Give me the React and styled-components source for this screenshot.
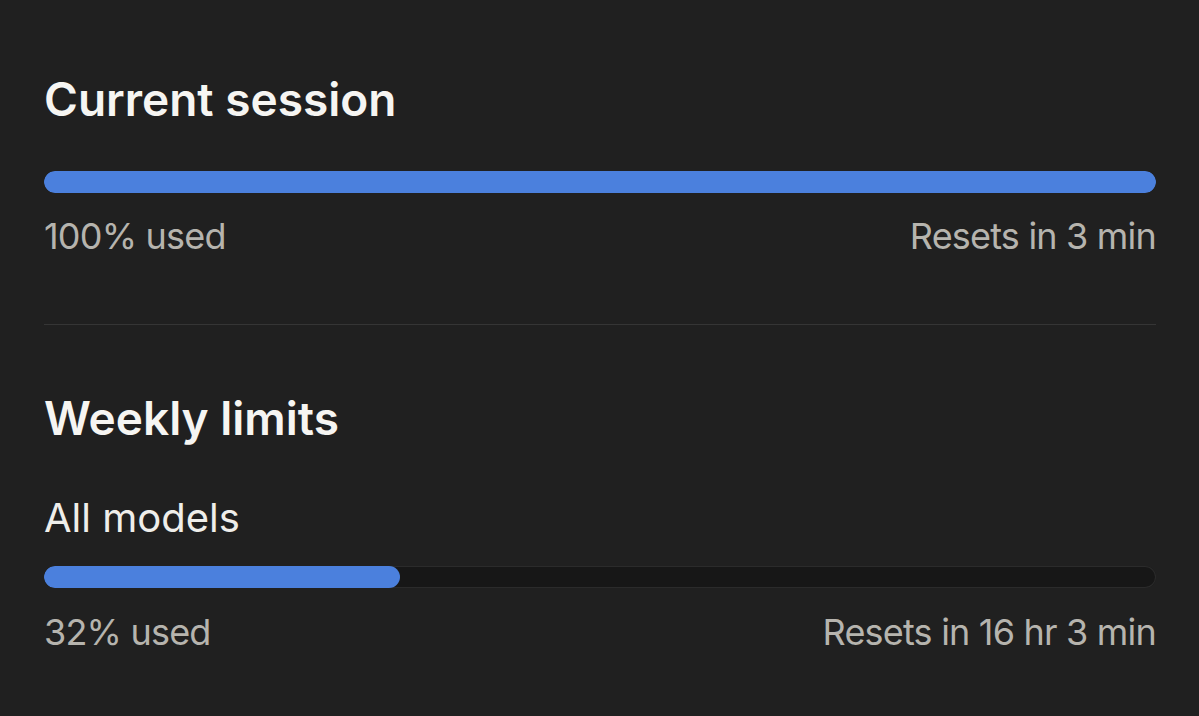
import React from "react";
import styled, { createGlobalStyle } from "styled-components";

const Global = createGlobalStyle`
  html, body { margin: 0; padding: 0; background: #202020; }
  body { font-family: Inter, "Noto Sans", sans-serif; -webkit-font-smoothing: antialiased; }
`;

const Page = styled.div`
  width: 1199px;
  height: 716px;
  box-sizing: border-box;
  background: #202020;
  padding: 77px 43px 0 44px;
  display: flex;
  flex-direction: column;
  overflow: hidden;
`;

const Section = styled.section`
  display: flex;
  flex-direction: column;
`;

const Heading = styled.h2`
  margin: 0;
  font-size: 46px;
  line-height: 45px;
  font-weight: 600;
  color: #f6f5f2;
  letter-spacing: 0;
`;

const Label = styled.div`
  margin-top: ${(p) => p.$gap}px;
  font-size: 40px;
  line-height: 40px;
  font-weight: 400;
  color: #efeeea;
`;

const Track = styled.div`
  margin-top: ${(p) => p.$gap}px;
  height: 22px;
  border-radius: 11px;
  background: #171717;
  box-shadow: inset 0 0 0 1px #2b2b2b;
  overflow: hidden;
`;

const Fill = styled.div`
  height: 100%;
  border-radius: 11px;
  background: #4b80dd;
`;

const Stats = styled.div`
  margin-top: ${(p) => p.$gap}px;
  display: flex;
  justify-content: space-between;
  font-size: 36px;
  line-height: 37px;
  letter-spacing: -0.8px;
  color: #b6b4ae;
`;

const Divider = styled.hr`
  margin: 69px 0 71px;
  border: none;
  height: 1px;
  background: #353535;
`;

function Usage({ pct, reset, barGap, statsGap }) {
  return (
    <>
      <Track $gap={barGap}>
        <Fill style={{ width: `${pct}%` }} />
      </Track>
      <Stats $gap={statsGap}>
        <span>{pct}% used</span>
        <span>{reset}</span>
      </Stats>
    </>
  );
}

export default function App() {
  return (
    <>
      <Global />
      <Page>
        <Section>
          <Heading>Current session</Heading>
          <Usage pct={100} reset="Resets in 3 min" barGap={49} statsGap={25} />
        </Section>
        <Divider />
        <Section>
          <Heading>Weekly limits</Heading>
          <Label $gap={57}>All models</Label>
          <Usage pct={32} reset="Resets in 16 hr 3 min" barGap={28} statsGap={26} />
        </Section>
      </Page>
    </>
  );
}
